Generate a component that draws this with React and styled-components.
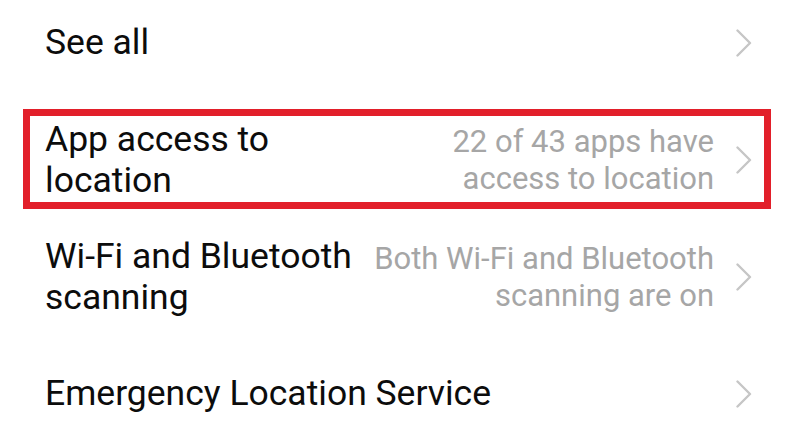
import React from "react";
import styled, { createGlobalStyle } from "styled-components";

const Global = createGlobalStyle`
  html, body { margin: 0; padding: 0; background: #ffffff; }
  body { width: 800px; height: 442px; overflow: hidden; font-family: Roboto, "Noto Sans", "Liberation Sans", sans-serif; }
`;

const List = styled.div`
  display: flex;
  flex-direction: column;
  margin-top: -16px;
`;

const Row = styled.div`
  position: relative;
  display: flex;
  align-items: center;
  min-height: 117px;
  padding: 0 48px 0 45px;
  box-sizing: border-box;
  gap: 10px;
  ${(p) =>
    p.$highlight &&
    `
    &::after {
      content: "";
      position: absolute;
      top: 8px;
      bottom: 9px;
      left: 23px;
      right: 29px;
      border: 7px solid #e21f2a;
    }
  `}
`;

const Title = styled.div`
  flex: 1 1 auto;
  font-size: 35.5px;
  line-height: 41px;
  color: #0c0c0c;
`;

const Secondary = styled.div`
  flex: 0 0 340px;
  margin-right: 12px;
  text-align: right;
  font-size: 31px;
  line-height: 37px;
  color: #a6a6a6;
`;

const Chevron = styled.svg`
  flex: 0 0 auto;
  width: 16px;
  height: 28px;
`;

const Arrow = () => (
  <Chevron viewBox="0 0 16 28">
    <polyline
      points="1.5,1.5 14,14 1.5,26.5"
      fill="none"
      stroke="#c6c6c6"
      strokeWidth="2.4"
      strokeLinecap="round"
      strokeLinejoin="round"
    />
  </Chevron>
);

const items = [
  { title: "See all" },
  { title: "App access to location", sub: "22 of 43 apps have access to location", highlight: true },
  { title: "Wi-Fi and Bluetooth scanning", sub: "Both Wi-Fi and Bluetooth scanning are on" },
  { title: "Emergency Location Service" },
];

export default function App() {
  return (
    <>
      <Global />
      <List>
        {items.map((it) => (
          <Row key={it.title} $highlight={it.highlight}>
            <Title>{it.title}</Title>
            {it.sub && <Secondary>{it.sub}</Secondary>}
            <Arrow />
          </Row>
        ))}
      </List>
    </>
  );
}
